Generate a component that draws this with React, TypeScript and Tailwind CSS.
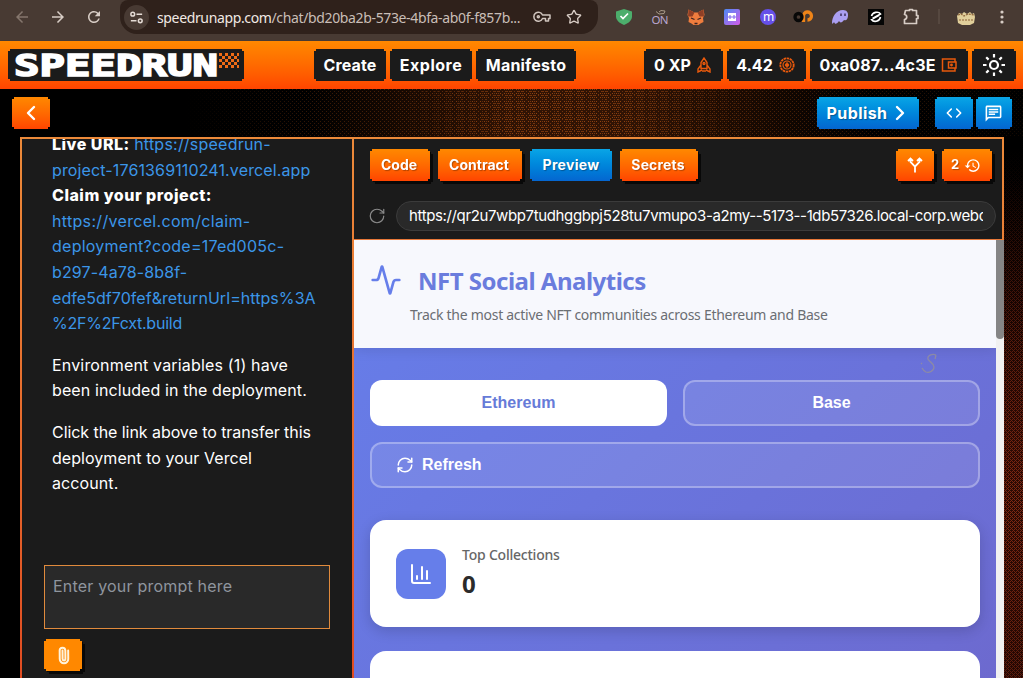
import type { ReactNode } from "react";
import { Activity, ChartColumn, ChevronLeft, ChevronRight, Code, Paperclip, RefreshCw, RotateCw, Star } from "lucide-react";
import { MdArrowBack, MdArrowForward, MdHistory, MdOutlineChat, MdRefresh } from "react-icons/md";

type Tone = "orange" | "blue" | "dark" | "flat";

type PixelButtonProps = {
  tone: Tone;
  className: string;
  shadow?: boolean;
  children: ReactNode;
};

const TONES: Record<Tone, string> = {
  orange: "bg-gradient-to-b from-[#ff8800] to-[#ff4400] [text-shadow:1px_1px_1px_rgba(0,0,0,0.3)]",
  blue: "bg-gradient-to-b from-[#0aa5e6] to-[#0566d0] [text-shadow:1px_1px_1px_rgba(0,0,0,0.3)]",
  dark: "bg-[#1b1b1b]",
  flat: "bg-[#ff8800]",
};

// Stepped 2px corners
const NOTCH =
  "[clip-path:polygon(2px_0,calc(100%-2px)_0,calc(100%-2px)_2px,100%_2px,100%_calc(100%-2px),calc(100%-2px)_calc(100%-2px),calc(100%-2px)_100%,2px_100%,2px_calc(100%-2px),0_calc(100%-2px),0_2px,2px_2px)]";

function PixelButton({ tone, className, shadow, children }: PixelButtonProps) {
  return (
    <div className={shadow ? "shrink-0 drop-shadow-[3px_3px_0_#080808]" : "shrink-0"}>
      <button
        type="button"
        className={`flex h-8 items-center justify-center whitespace-nowrap font-bold text-white ${NOTCH} ${TONES[tone]} ${className}`}
      >
        {children}
      </button>
    </div>
  );
}

function BrowserBar() {
  return (
    <div className="flex h-[41px] shrink-0 items-start bg-[#483a33] font-['Noto_Sans',sans-serif]">
      <div className="flex h-[34px] w-[120px] items-center text-[#d8cdc6]">
        <MdArrowBack className="ml-[13px] size-[18px] text-[#85766d]" />
        <MdArrowForward className="ml-[18px] size-[18px]" />
        <MdRefresh className="ml-[18px] size-[18px]" />
      </div>
      <div className="flex h-[34px] w-[478px] items-center rounded-b-[17px] rounded-t-[8px] bg-[#2f211b]">
        <div className="ml-1 flex size-[25px] items-center justify-center rounded-full bg-[#483a33]">
          <svg viewBox="0 0 16 16" className="size-[15px]" fill="none" stroke="#e5dcd6" strokeWidth="1.6">
            <circle cx="4" cy="4.500" r="2" />
            <path d="M8 4.500h6M2 11.500h6" />
            <circle cx="12" cy="11.500" r="2" />
          </svg>
        </div>
        <p className="ml-2 w-[364px] whitespace-nowrap text-[14px] tracking-[-0.36px] text-[#c9beb7]">
          <span className="text-[#f1e9e4]">speedrunapp.com</span>/chat/bd20ba2b-573e-4bfa-ab0f-f857b...
        </p>
        <svg viewBox="0 0 18 12" className="ml-3 h-3 w-[18px]" fill="none" stroke="#d0c5be" strokeWidth="1.500">
          <path d="M9.500 4H17v3.500h-1.500V10h-3V7.500h-3A4.500 4.500 0 1 1 9.500 4z" strokeLinejoin="round" />
          <circle cx="5.300" cy="5.800" r="1" />
        </svg>
        <Star className="ml-[15px] size-[16px] text-[#d8cdc6]" />
      </div>
      <Extensions />
    </div>
  );
}

function Extensions() {
  return (
    <svg viewBox="0 0 425 34" className="h-[34px] w-[425px]" fill="none">
      <path d="M26 9l8 2.500v5c0 4-4 7-8 8.500-4-1.500-8-4.500-8-8.500v-5z" fill="#4cae6c" />
      <path d="M22.500 16l2.500 2.500 5-5" stroke="#fff" strokeWidth="1.700" />
      <text x="53.500" y="24" fontSize="11.500" fill="#b9a6cf" fontFamily="Noto Sans" textLength="17">ON</text>
      <path d="M58 11.500l3 2.500 5-.5 1-2.500-4-.5-2 1.500" stroke="#a89a88" />
      <path d="M90.500 9.500l6 3h3l6-3 1 5.500-1.500 3 .5 4-3 1.500-2 1.500h-5l-2-1.500-3-1.500.5-4-1.500-3z" fill="#ef7d3e" />
      <path d="M90.500 9.500l6 3-2 4-4.500 0zM105.500 9.500l-6 3 2 4 4.500 0z" fill="#8f3f26" />
      <path d="M93 18l3.500 1.500M103 18l-3.500 1.500M96.500 23.500h3" stroke="#3c2320" strokeWidth="1.300" />
      <rect x="126" y="9" width="16" height="16" rx="2" fill="url(#tile)" />
      <path d="M130 13h8v8h-8z" fill="#fff" />
      <path d="M132 15v4M136 15v4M130 17h8" stroke="#846bee" strokeWidth="1.100" />
      <circle cx="170" cy="17" r="8" fill="#6550e8" />
      <text x="165" y="21" fontSize="12" fill="#fff" fontFamily="Noto Sans">m</text>
      <path d="M205.500 22v-5.500a4 4 0 1 1 4 3.500" stroke="#ef8418" strokeWidth="3.300" />
      <circle cx="200.500" cy="17" r="3.500" stroke="#080808" strokeWidth="3.300" />
      <path d="M234 23c0-6 4-13 11-13 4 0 5.500 3 5 6-.5 4-2 5-4 4-2 3-4 3-5 1-2 3-4 4-5 1-1 2-2 2-2 1z" fill="#ab9ff2" />
      <path d="M243 13.500v2.500M247 13.500v2.500" stroke="#3c315b" strokeWidth="1.500" />
      <path d="M268 9h16v16h-16z" transform="translate(2 0)" fill="#050505" />
      <path d="M273.500 16c1-4 7-5 9-2l-8 4.500M282.500 17c-1 5-7 5.500-9 2.500l8-4.500" stroke="#fff" strokeWidth="1.600" />
      <path d="M307.500 10.500h4v-1h3v1h4v5h1.500v3h-1.500v5h-12v-4c3-.5 3-4.500 0-5z" stroke="#d8cdc6" strokeWidth="1.700" strokeLinejoin="round" />
      <path d="M341 9v15" stroke="#65574f" />
      <path d="M359 16l2-3 3 1 2-2 3 2 3-2 2 2 2-1 1 4-1 6-4 2h-8l-4-2z" fill="#e1cf9b" />
      <path d="M360 15l3-1 3 2 4-2 6 1M361 20h14" stroke="#8c6338" strokeWidth="1.200" strokeDasharray="2 1" />
      <g fill="#d8cdc6">
        <circle cx="404" cy="12" r="1.600" />
        <circle cx="404" cy="17" r="1.600" />
        <circle cx="404" cy="22" r="1.600" />
      </g>
      <defs>
        <linearGradient id="tile" x1="0" y1="0" x2="1" y2="1">
          <stop stopColor="#4b8bf5" />
          <stop offset="1" stopColor="#d45be8" />
        </linearGradient>
      </defs>
    </svg>
  );
}

function Logo() {
  return (
    <svg viewBox="0 0 236 32" className="h-8 w-[236px] shrink-0 overflow-visible">
      <defs>
        <pattern id="checks" width="6" height="6" patternUnits="userSpaceOnUse" x="211" y="4">
          <path d="M0 0h3v3H0zM3 3h3v3H3z" fill="#ee6b16" />
        </pattern>
      </defs>
      <path d="M2 0h232v2h2v28h-2v2H2v-2H0V2h2z" fill="#1b1b1b" />
      <text
        x="6"
        y="27"
        fontFamily="DejaVu Sans Mono"
        fontWeight="700"
        fontSize="30.500"
        fill="#fff"
        stroke="#fff"
        strokeWidth="1.600"
        textLength="204"
        lengthAdjust="spacingAndGlyphs"
      >
        SPEEDRUN
      </text>
      <path d="M211 4h20v15h-20z" fill="url(#checks)" />
    </svg>
  );
}

function SunIcon() {
  return (
    <svg viewBox="0 0 24 24" className="size-6" fill="none" stroke="#fff" strokeWidth="2.200">
      <circle cx="12" cy="12" r="4" />
      <path d="M12 1v3.500M12 19.500V23M1 12h3.500M19.500 12H23M4.200 4.200l2.400 2.400M17.400 17.400l2.400 2.400M4.200 19.800l2.400-2.400M17.400 6.600l2.400-2.400" />
    </svg>
  );
}

function Header() {
  return (
    <header className="flex h-12 shrink-0 items-center bg-gradient-to-b from-[#ff8800] to-[#ff4400] pl-2 text-[16px]">
      <Logo />
      <nav className="ml-[70px] flex gap-1">
        <PixelButton tone="dark" className="w-[72px] tracking-[0.15px]">Create</PixelButton>
        <PixelButton tone="dark" className="w-[82px] tracking-[0.5px]">Explore</PixelButton>
        <PixelButton tone="dark" className="w-[100px] tracking-[0.2px]">Manifesto</PixelButton>
      </nav>
      <div className="ml-[68px] flex gap-1">
        <PixelButton tone="dark" className="w-[79px] gap-1.5 pr-0.5">
          0 XP
          <svg viewBox="0 0 14 16" className="h-4 w-3.5" fill="none" stroke="#e8590c" strokeWidth="1.400">
            <path d="M4 11.500V5.500L7 1l3 4.500v6zM4 8l-3 4v3l4-2M10 8l3 4v3l-4-2M5 14h4" />
            <circle cx="7" cy="6.500" r="1" />
          </svg>
        </PixelButton>
        <PixelButton tone="dark" className="w-[79px] gap-1.5 pr-0.5">
          4.42
          <svg viewBox="0 0 16 16" className="size-4" fill="none" stroke="#e8590c">
            <circle cx="8" cy="8" r="6.700" strokeWidth="1.800" strokeDasharray="2.500 .6" />
            <circle cx="8" cy="8" r="4" strokeWidth="1.200" />
            <path d="M8 5.500L10 8l-2 2.500L6 8z" fill="#e8590c" />
          </svg>
        </PixelButton>
        <PixelButton tone="dark" className="w-[158px] gap-[5px] pr-0.5 tracking-[0.15px]">
          0xa087...4c3E
          <svg viewBox="0 0 16 16" className="size-4" fill="none" stroke="#e8590c" strokeWidth="1.500">
            <path d="M14 5V2H1.500v12H14v-3M7.500 5H15v6H7.500z" />
            <circle cx="10.500" cy="8" r=".7" />
          </svg>
        </PixelButton>
        <PixelButton tone="dark" className="w-[44px]">
          <SunIcon />
        </PixelButton>
      </div>
    </header>
  );
}

function ActionRow() {
  return (
    <div className="flex h-12 shrink-0 items-center pl-3 text-[16px]">
      <PixelButton tone="orange" className="w-[38px]">
        <ChevronLeft className="size-[24px]" strokeWidth={2.4} />
      </PixelButton>
      <div className="ml-[767px] flex">
        <PixelButton tone="blue" className="w-[102px] pl-[3px] tracking-[0.4px]">
          Publish
          <ChevronRight className="ml-px size-[24px]" strokeWidth={2.4} />
        </PixelButton>
        <div className="ml-4 flex gap-[3px]">
          <PixelButton tone="blue" className="w-[38px]">
            <Code className="size-[16px]" strokeWidth={2.4} />
          </PixelButton>
          <PixelButton tone="blue" className="w-[36px] pr-0.5">
            <MdOutlineChat className="size-[19px]" />
          </PixelButton>
        </div>
      </div>
    </div>
  );
}

// Halftone glow behind the panels
function Dither() {
  return (
    <svg className="absolute inset-x-0 bottom-0 top-[89px] h-[589px] w-full" shapeRendering="crispEdges" aria-hidden>
      <defs>
        <pattern id="coarse" width="4" height="4" patternUnits="userSpaceOnUse">
          <path d="M0 0h1v1H0zM2 2h1v1H2z" fill="#a04a12" />
        </pattern>
        <pattern id="fine" width="12" height="12" patternUnits="userSpaceOnUse">
          <path
            d="M0 0h1v1H0zM2 0h1v1H2zM4 0h1v1H4zM6 0h1v1H6zM8 0h1v1H8zM1 2h1v1H1zM3 2h1v1H3zM5 2h1v1H5zM7 2h1v1H7zM0 4h1v1H0zM2 4h1v1H2zM4 4h1v1H4zM6 4h1v1H6zM8 4h1v1H8zM1 6h1v1H1zM3 6h1v1H3zM5 6h1v1H5zM7 6h1v1H7zM0 8h1v1H0zM2 8h1v1H2zM4 8h1v1H4zM6 8h1v1H6zM8 8h1v1H8zM10 5h1v1h-1zM5 10h1v1H5z"
            fill="#a84e14"
          />
        </pattern>
        <pattern id="ember" width="4" height="4" patternUnits="userSpaceOnUse">
          <path d="M0 0h1v1H0zM2 0h1v1H2zM1 1h1v1H1zM2 2h1v1H2zM0 2h1v1H0zM3 3h1v1H3z" fill="#8a2c14" />
        </pattern>
        <linearGradient id="across">
          <stop offset=".18" stopColor="#fff" stopOpacity="0" />
          <stop offset=".3" stopColor="#fff" stopOpacity=".3" />
          <stop offset=".53" stopColor="#fff" stopOpacity=".6" />
          <stop offset=".75" stopColor="#fff" stopOpacity=".4" />
          <stop offset="1" stopColor="#fff" stopOpacity=".12" />
        </linearGradient>
        <linearGradient id="centre">
          <stop offset=".38" stopColor="#fff" stopOpacity="0" />
          <stop offset=".5" stopColor="#fff" stopOpacity=".6" />
          <stop offset=".6" stopColor="#fff" stopOpacity=".6" />
          <stop offset=".76" stopColor="#fff" stopOpacity="0" />
        </linearGradient>
        <linearGradient id="down" x2="0" y2="1">
          <stop offset=".1" stopColor="#fff" stopOpacity="0" />
          <stop offset=".4" stopColor="#fff" stopOpacity=".5" />
          <stop offset=".7" stopColor="#fff" stopOpacity=".9" />
          <stop offset="1" stopColor="#fff" stopOpacity=".55" />
        </linearGradient>
        <linearGradient id="warm">
          <stop offset=".3" stopColor="#301304" stopOpacity="0" />
          <stop offset=".5" stopColor="#301304" />
          <stop offset=".62" stopColor="#301304" />
          <stop offset=".85" stopColor="#301304" stopOpacity="0" />
        </linearGradient>
        <linearGradient id="hot" x2="0" y2="1">
          <stop offset=".15" stopColor="#2c0a04" stopOpacity="0" />
          <stop offset=".6" stopColor="#2c0a04" />
          <stop offset="1" stopColor="#240803" />
        </linearGradient>
        <mask id="m-across"><rect width="1023" height="48" fill="url(#across)" /></mask>
        <mask id="m-centre"><rect width="1023" height="48" fill="url(#centre)" /></mask>
        <mask id="m-down"><rect x="1004" width="19" height="589" fill="url(#down)" /></mask>
      </defs>
      <rect width="1023" height="48" fill="url(#warm)" />
      <rect x="1004" width="19" height="589" fill="url(#hot)" />
      <rect width="1023" height="48" fill="url(#coarse)" mask="url(#m-across)" />
      <rect width="1023" height="48" fill="url(#fine)" mask="url(#m-centre)" />
      <rect x="1004" width="19" height="589" fill="url(#ember)" mask="url(#m-down)" />
    </svg>
  );
}

function ChatPanel() {
  return (
    <aside className="flex w-[330px] shrink-0 flex-col overflow-hidden bg-[#1b1b1b] text-[16px] leading-[25.6px] text-white">
      <div className="-mt-[7px] flex h-[433px] shrink-0 flex-col gap-4 whitespace-nowrap pl-[30px]">
        <p>
          <strong className="font-extrabold tracking-[0.5px]">Live URL:</strong>{" "}
          <span className="tracking-[0.22px] text-[#3b96e8]">https://speedrun-</span>
          <br />
          <span className="tracking-[0.13px] text-[#3b96e8]">project-1761369110241.vercel.app</span>
          <br />
          <strong className="font-extrabold tracking-[0.5px]">Claim your project:</strong>
          <br />
          <span className="text-[#3b96e8]">
            <span className="tracking-[0.32px]">https://vercel.com/claim-</span>
            <br />
            <span className="tracking-[0.25px]">deployment?code=17ed005c-</span>
            <br />
            <span className="tracking-[0.13px]">b297-4a78-8b8f-</span>
            <br />
            <span className="tracking-[0.06px]">edfe5df70fef&amp;returnUrl=https%3A</span>
            <br />
            <span className="tracking-[-0.25px]">%2F%2Fcxt.build</span>
          </span>
        </p>
        <p>
          <span className="tracking-[0.17px]">Environment variables (1) have</span>
          <br />
          <span className="tracking-[0.1px]">been included in the deployment.</span>
        </p>
        <p>
          <span className="tracking-[-0.06px]">Click the link above to transfer this</span>
          <br />
          <span className="tracking-[0.05px]">deployment to your Vercel</span>
          <br />
          <span className="tracking-[0.1px]">account.</span>
        </p>
      </div>
      <div className="ml-[22px] h-16 w-[286px] shrink-0 border border-[#e08a3c] bg-[#292929] px-2 py-2 tracking-[0.2px] text-[#8f959e]">
        Enter your prompt here
      </div>
      <div className="ml-[22px] mt-2.5">
        <PixelButton tone="flat" shadow className="w-[38px]">
          <Paperclip className="size-[17px] -rotate-45 text-[#fff3dc]" strokeWidth={2.8} />
        </PixelButton>
      </div>
    </aside>
  );
}

function PreviewToolbar() {
  return (
    <div className="flex h-[101px] shrink-0 flex-col border-b border-[#e8793a] bg-[#1b1b1b]">
      <div className="flex h-[52px] items-center gap-2 pl-4 text-[14px]">
        <PixelButton tone="orange" shadow className="w-[60px] pb-0.5 pr-0.5">Code</PixelButton>
        <PixelButton tone="orange" shadow className="w-[84px] pb-0.5 pr-0.5">Contract</PixelButton>
        <PixelButton tone="blue" className="w-[82px] pb-0.5 tracking-[0.3px]">Preview</PixelButton>
        <PixelButton tone="orange" shadow className="w-[78px] pb-0.5 pr-0.5 tracking-[0.15px]">Secrets</PixelButton>
        <div className="ml-[190px] flex gap-2">
          <PixelButton tone="orange" shadow className="w-[38px]">
            <svg viewBox="0 0 16 16" className="size-4" fill="none" stroke="#fff" strokeWidth="1.800">
              <path d="M8 15.500V9.500L3.500 5V2.500M8 9.500L12.500 5V2.500M1 4l2.500-2.500L6 4M10 4l2.500-2.500L15 4" />
            </svg>
          </PixelButton>
          <PixelButton tone="orange" shadow className="w-[50px] gap-[5px] pr-0.5 text-[13px]">
            2
            <MdHistory className="size-[17px]" />
          </PixelButton>
        </div>
      </div>
      <div className="mt-[10px] flex h-[30px] items-center">
        <RotateCw className="ml-3.5 size-[18px] text-[#8a8a8a]" strokeWidth={1.6} />
        <div className="ml-[10px] h-[30px] w-[600px] rounded-full border border-[#3b3b3b] bg-[#292929] px-3">
          <p className="overflow-hidden whitespace-nowrap text-[15px] leading-7 tracking-[-0.37px] text-white">
            https://qr2u7wbp7tudhggbpj528tu7vmupo3-a2my--5173--1db57326.local-corp.webcontainer
          </p>
        </div>
      </div>
    </div>
  );
}

function Dashboard() {
  return (
    <div className="flex h-[439px] w-[642px] flex-col overflow-hidden bg-[linear-gradient(135deg,#667eea_0px,#6c6cd2_700px,#764ba2_1500px)] font-['Noto_Sans',sans-serif]">
      <div className="h-[108px] shrink-0 bg-[#f7f8fd] shadow-[0_2px_12px_rgba(0,0,0,0.1)]">
        <div className="flex items-start gap-4 pl-4 pt-6">
          <Activity className="size-8 text-[#667eea]" />
          <h1 className="-mt-px whitespace-nowrap text-[24px] font-bold leading-9 tracking-[-0.5px] text-[#6a7cdd]">
            NFT Social Analytics
          </h1>
        </div>
        <p className="pl-14 pt-[5px] text-[14px] leading-[22px] tracking-[-0.28px] text-[#6b6e73]">
          Track the most active NFT communities across Ethereum and Base
        </p>
      </div>
      <div className="flex flex-col px-4 pt-8">
        <div className="grid grid-cols-2 gap-4 font-['Liberation_Sans',sans-serif] text-[16px] font-bold text-white">
          <button type="button" className="h-[46px] rounded-xl bg-white text-[#667bd8]">Ethereum</button>
          <button type="button" className="h-[46px] rounded-xl border-2 border-white/30 bg-white/10">Base</button>
          <button
            type="button"
            className="col-span-2 flex h-[46px] items-center gap-2 rounded-xl border-2 border-white/30 bg-white/10 pl-6"
          >
            <RefreshCw className="size-[18px]" />
            Refresh
          </button>
        </div>
        <div className="mt-8 flex h-[107px] shrink-0 items-center gap-4 rounded-2xl bg-white px-[26px] shadow-[0_4px_14px_rgba(0,0,0,0.16)]">
          <div className="flex size-[50px] items-center justify-center rounded-xl bg-[#667eea]">
            <ChartColumn className="size-6 text-white" />
          </div>
          <div>
            <p className="pb-px text-[14px] font-medium leading-5 tracking-[-0.22px] text-[#666]">Top Collections</p>
            <p className="text-[24px] font-bold leading-9 text-[#2b2b2b]">0</p>
          </div>
        </div>
        <div className="mt-6 h-[107px] shrink-0 rounded-2xl bg-white" />
      </div>
    </div>
  );
}

export default function App() {
  return (
    <div className="relative flex h-[678px] w-[1023px] flex-col overflow-hidden bg-black font-['Inter',sans-serif]">
      <BrowserBar />
      <Header />
      <Dither />
      <div className="relative flex min-h-0 flex-1 flex-col">
        <ActionRow />
        <div className="ml-5 flex min-h-0 w-[984px] flex-1 bg-gradient-to-b from-[#ec8a3a] to-[#e04c22] pl-0.5 pt-0.5">
          <ChatPanel />
          <main className="ml-0.5 flex w-[650px] shrink-0 flex-col">
            <div className="w-[648px]">
              <PreviewToolbar />
            </div>
            <div className="flex">
              <Dashboard />
              <div className="h-[439px] w-2 bg-[#f1f1f1]">
                <div className="h-[99px] rounded-b bg-[#858585]" />
              </div>
            </div>
          </main>
        </div>
      </div>
      {/* signature mark floating over the preview */}
      <svg viewBox="0 0 18 20" className="absolute left-[919px] top-[353px] h-5 w-[18px]" fill="none" stroke="#8c8aa6" strokeWidth="1.300">
        <path d="M17 2C13 0 8 3 9 6s6 4 6 8-5 6-8 5c-2-1-3-2-4-4M17 2l-1 4M2 10l1 1" />
      </svg>
    </div>
  );
}
